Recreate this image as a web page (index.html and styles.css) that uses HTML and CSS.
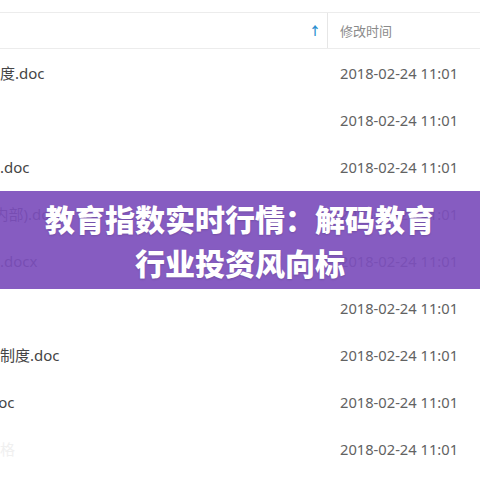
FILE: index.html
```html
<!DOCTYPE html>
<html lang="zh-CN">
<head>
    <meta charset="UTF-8">
    <title>教育指数实时行情</title>
    <link rel="stylesheet" href="styles.css">
</head>
<body>
    <div class="files">
        <div class="head">
            <div class="head-name"><span class="sort">&#8593;</span></div>
            <div class="head-time">修改时间</div>
        </div>
        <div class="row"><div class="name">公司员工考勤制度.doc</div><div class="time">2018-02-24 11:01</div></div>
        <div class="row"><div class="name">合同.doc</div><div class="time">2018-02-24 11:01</div></div>
        <div class="row"><div class="name">部门工作计划表.doc</div><div class="time">2018-02-24 11:01</div></div>
        <div class="row"><div class="name">员工入职手册 (内部).doc</div><div class="time">2018-02-24 11:01</div></div>
        <div class="row"><div class="name">项目进度汇报表.docx</div><div class="time">2018-02-24 11:01</div></div>
        <div class="row"><div class="name">报价单.xls</div><div class="time">2018-02-24 11:01</div></div>
        <div class="row"><div class="name">办公室用品管理制度.doc</div><div class="time">2018-02-24 11:01</div></div>
        <div class="row"><div class="name">会议纪要模板.doc</div><div class="time">2018-02-24 11:01</div></div>
        <div class="row"><div class="name faint">培训资料汇总表格</div><div class="time">2018-02-24 11:01</div></div>
    </div>

    <!-- заголовок поверх списка -->
    <div class="banner">
        <h1>教育指数实时行情：解码教育<br>行业投资风向标</h1>
    </div>
</body>
</html>
```

FILE: styles.css
```css
body {
    margin: 0;
    padding: 0;
    background-color: #ffffff;
    font-family: "Noto Sans", "Noto Sans CJK SC", sans-serif;
    color: #444444;
    width: 480px;
    height: 480px;
    overflow: hidden;
    position: relative;
}
.files {
    margin-top: 12px;
    margin-left: -105px;
}
.head {
    display: grid;
    grid-template-columns: 433px 1fr;
    height: 35px;
    border-top: 1px solid #ececec;
    border-bottom: 1px solid #ececec;
}
.head-name {
    display: flex;
    align-items: center;
    justify-content: flex-end;
    padding-right: 6px;
    border-right: 1px solid #e6e6e6;
}
.sort {
    color: #2b8fd0;
    font-size: 12px;
    font-weight: bold;
}
.head-time {
    display: flex;
    align-items: center;
    padding-left: 12px;
    font-size: 13px;
    color: #8a8a8a;
}
.row {
    display: grid;
    grid-template-columns: 433px 1fr;
    height: 47px;
    align-items: center;
}
.name {
    font-size: 15px;
    white-space: nowrap;
    overflow: hidden;
    color: #454545;
}
.name.faint {
    color: #f0f0f0;
}
.time {
    padding-left: 12px;
    font-size: 14.7px;
    color: #626262;
}
.banner {
    position: absolute;
    left: 0;
    top: 191px;
    width: 480px;
    height: 98px;
    background-color: rgba(124, 78, 188, 0.92);
    display: flex;
    align-items: center;
    justify-content: center;
}
.banner h1 {
    margin: 0;
    font-family: "Noto Sans CJK SC", sans-serif;
    font-weight: 900;
    font-size: 30px;
    line-height: 44px;
    color: #ffffff;
    text-align: center;
    text-shadow: 0 1px 2px rgba(0, 0, 0, 0.15);
}
```
